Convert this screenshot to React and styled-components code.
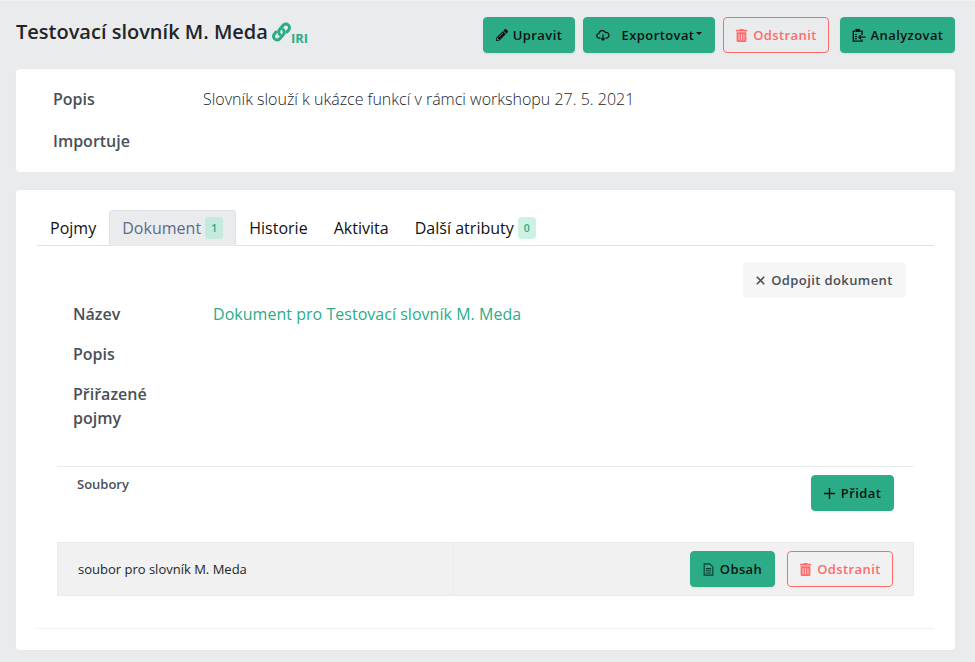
import React from 'react';
import styled, { createGlobalStyle } from 'styled-components';
import { FaPencilAlt, FaTrashAlt } from 'react-icons/fa';

const GlobalStyle = createGlobalStyle`
  html, body {
    margin: 0;
    padding: 0;
    background: #e9ebed;
    font-family: "Open Sans", "Noto Sans", sans-serif;
    color: #212529;
  }
`;

const Page = styled.div`
  box-sizing: border-box;
  width: 975px;
  height: 662px;
  overflow: hidden;
  padding: 16px 20px 0 16px;
  border-top: 1px solid #eef3f4;
`;

const Header = styled.div`
  display: flex;
  justify-content: space-between;
  align-items: center;
  height: 36px;
  margin-bottom: 16px;
`;

const Title = styled.h2`
  display: flex;
  align-items: center;
  margin: 0;
  font-size: 20px;
  font-weight: 600;
  color: #212529;
  line-height: 30px;
  position: relative;
  top: -3px;
`;

const IriLink = styled.span`
  display: inline-flex;
  align-items: flex-end;
  margin-left: 3px;
  color: #2bac87;
  svg { display: block; }
`;

const IriText = styled.span`
  font-size: 13px;
  font-weight: 700;
  line-height: 13px;
  margin-left: -1px;
  position: relative;
  top: 2px;
`;

const Toolbar = styled.div`
  display: flex;
  gap: 8px;
`;

const Button = styled.button`
  box-sizing: border-box;
  display: inline-flex;
  align-items: center;
  justify-content: center;
  gap: ${(p) => p.$gap || 5}px;
  height: 36px;
  width: ${(p) => p.$width}px;
  margin-left: ${(p) => p.$ml || 0}px;
  padding: 0;
  border-radius: 4px;
  font-family: inherit;
  font-size: 13px;
  font-weight: 600;
  letter-spacing: 0.4px;
  white-space: nowrap;
  ${(p) =>
    p.$variant === 'danger'
      ? 'background: transparent; border: 1px solid #ff6b6b; color: #ff6b6b;'
      : p.$variant === 'light'
      ? 'background: #f6f6f6; border: 1px solid #f6f6f6; color: #495057;'
      : 'background: #2bac87; border: 1px solid #2bac87; color: #111; box-shadow: 0 1px 2px rgba(0,0,0,.08);'}
`;

const Caret = styled.span`
  display: inline-block;
  width: 0;
  height: 0;
  margin-left: -3px;
  margin-top: -3px;
  border-top: 3px solid #111;
  border-left: 3px solid transparent;
  border-right: 3px solid transparent;
`;

const Card = styled.section`
  box-sizing: border-box;
  background: #fff;
  border-radius: 4px;
  box-shadow: 0 0 2px rgba(0, 0, 0, 0.04);
`;

const InfoCard = styled(Card)`
  height: 103px;
  padding: 18px 37px 0;
  margin-bottom: 18px;
`;

const MainCard = styled(Card)`
  height: 460px;
  padding: 20px 21px 0;
`;

const AttrRow = styled.div`
  display: grid;
  grid-template-columns: ${(p) => p.$label}px 1fr;
  padding-bottom: ${(p) => p.$pb || 0}px;
`;

const AttrLabel = styled.div`
  font-size: 16px;
  font-weight: 600;
  line-height: 24px;
  color: #495057;
`;

const AttrValue = styled.div`
  font-size: 16px;
  font-weight: ${(p) => p.$weight || 300};
  line-height: 24px;
  letter-spacing: ${(p) => p.$spacing || 0}px;
  color: ${(p) => p.$color || '#212529'};
`;

const Tabs = styled.div`
  display: flex;
  height: 35px;
  border-bottom: 1px solid #dee2e6;
`;

const Tab = styled.div`
  box-sizing: border-box;
  display: flex;
  align-items: center;
  height: 36px;
  padding: 0 13px;
  font-size: 16px;
  font-weight: 400;
  letter-spacing: 0.02px;
  border-radius: 4px 4px 0 0;
  ${(p) =>
    p.$active
      ? 'background: #e9ebed; color: #5c6b8a; border: 1px solid #dee2e6; border-bottom-color: #e9ebed; padding: 0 12px;'
      : 'color: #111;'}
`;

const Badge = styled.span`
  display: inline-flex;
  align-items: center;
  justify-content: center;
  width: 18px;
  height: 22px;
  margin-left: 4px;
  border-radius: 4px;
  font-size: 10.5px;
  font-weight: 600;
  color: #2bac87;
  background: ${(p) => (p.$active ? '#c4e9dd' : '#cdf1e5')};
`;

const TabBody = styled.div`
  padding: 16px 20px 0;
`;

const ActionRow = styled.div`
  display: flex;
  justify-content: flex-end;
  padding-right: 8px;
  margin-bottom: 4px;
`;

const Attrs = styled.div`
  padding-left: 16px;
`;

const FilesBlock = styled.div`
  margin-top: 36px;
  border-top: 1px solid #e9ebed;
`;

const FilesHead = styled.div`
  display: flex;
  justify-content: space-between;
  padding: 8px 20px 0;
  height: 75px;
  box-sizing: border-box;
`;

const FilesTitle = styled.div`
  font-size: 13px;
  font-weight: 600;
  line-height: 18px;
  color: #495057;
`;

const FileRow = styled.div`
  box-sizing: border-box;
  display: grid;
  grid-template-columns: 396px 1fr;
  height: 54px;
  background: #f1f1f2;
  border: 1px solid #e9ebed;
`;

const FileName = styled.div`
  display: flex;
  align-items: center;
  padding-left: 20px;
  font-size: 13px;
  color: #212529;
  border-right: 1px solid #e9ebed;
`;

const FileActions = styled.div`
  display: flex;
  align-items: center;
  justify-content: flex-end;
  gap: 12px;
  padding-right: 20px;
`;

const CardFooter = styled.div`
  margin-top: 32px;
  border-top: 1px solid #eeeff0;
`;

const ExportSpacer = styled.span`
  width: 2px;
`;

const CloudIcon = () => (
  <svg width="14" height="14" viewBox="0 0 16 16" fill="none" stroke="currentColor" strokeWidth="1.4">
    <path d="M5 11.5H3.6A2.6 2.6 0 0 1 3.4 6.3 3.9 3.9 0 0 1 10.8 5.3 3.1 3.1 0 0 1 12.4 11.5H11" />
    <path d="M8 7.5V14M5.8 11.8 8 14l2.2-2.2" />
  </svg>
);

const ClipboardIcon = () => (
  <svg width="14" height="14" viewBox="0 0 16 16" fill="none" stroke="currentColor" strokeWidth="1.5">
    <path d="M4 3.5H1.5V15h10v-2M11.5 8V3.5H9" />
    <rect x="4" y="1" width="5" height="3.5" fill="currentColor" stroke="none" />
    <path d="M3.5 7.5h2M3.5 10h2M3.5 12.5h2" />
    <path d="M15.5 10.5H8M10.2 8.2 7.9 10.5l2.3 2.3" />
  </svg>
);

const FileIcon = () => (
  <svg width="11" height="13" viewBox="0 0 12 15" fill="none" stroke="#063f30" strokeWidth="1.3">
    <path d="M1 1h6.5L11 4.5V14H1z" />
    <path d="M3 6.5h6M3 9h6M3 11.5h6" />
  </svg>
);

const LinkIcon = () => (
  <svg width="21" height="22" viewBox="0 0 21 22" fill="none" stroke="currentColor" strokeWidth="3" strokeLinecap="round">
    <path d="M12.2 8.5a3.6 3.6 0 0 1 .2 5l-3.6 4.2a3.6 3.6 0 0 1-5.4-4.8l1.6-1.9" />
    <path d="M8.8 13.5a3.6 3.6 0 0 1-.2-5l3.6-4.2a3.6 3.6 0 0 1 5.4 4.8l-1.6 1.9" />
  </svg>
);

const PlusIcon = () => (
  <svg width="11" height="11" viewBox="0 0 11 11" stroke="currentColor" strokeWidth="1.4">
    <path d="M5.5 0v11M0 5.5h11" />
  </svg>
);

const CrossIcon = () => (
  <svg width="9" height="9" viewBox="0 0 9 9" stroke="currentColor" strokeWidth="1.6">
    <path d="M0.8 0.8l7.4 7.4M8.2 0.8l-7.4 7.4" />
  </svg>
);

const App = () => (
  <Page>
    <GlobalStyle />
    <Header>
      <Title>
        Testovací slovník M. Meda
        <IriLink>
          <LinkIcon />
          <IriText>IRI</IriText>
        </IriLink>
      </Title>
      <Toolbar>
        <Button $width={92}>
          <FaPencilAlt size={12} />
          Upravit
        </Button>
        <Button $width={132}>
          <CloudIcon />
          <ExportSpacer />
          Exportovat
          <Caret />
        </Button>
        <Button $width={106} $variant="danger">
          <FaTrashAlt size={13} />
          Odstranit
        </Button>
        <Button $width={115} $ml={3}>
          <ClipboardIcon />
          Analyzovat
        </Button>
      </Toolbar>
    </Header>

    <InfoCard>
      <AttrRow $label={150} $pb={18}>
        <AttrLabel>Popis</AttrLabel>
        <AttrValue>Slovník slouží k ukázce funkcí v rámci workshopu 27. 5. 2021</AttrValue>
      </AttrRow>
      <AttrRow $label={150}>
        <AttrLabel>Importuje</AttrLabel>
        <AttrValue />
      </AttrRow>
    </InfoCard>

    <MainCard>
      <Tabs>
        <Tab>Pojmy</Tab>
        <Tab $active>
          Dokument
          <Badge $active>1</Badge>
        </Tab>
        <Tab>Historie</Tab>
        <Tab>Aktivita</Tab>
        <Tab>
          Další atributy
          <Badge>0</Badge>
        </Tab>
      </Tabs>
      <TabBody>
        <ActionRow>
          <Button $width={163} $variant="light" $gap={6}>
            <CrossIcon />
            Odpojit dokument
          </Button>
        </ActionRow>
        <Attrs>
          <AttrRow $label={140} $pb={16}>
            <AttrLabel>Název</AttrLabel>
            <AttrValue $weight={400} $color="#2bac87" $spacing={0.03}>
              Dokument pro Testovací slovník M. Meda
            </AttrValue>
          </AttrRow>
          <AttrRow $label={140} $pb={16}>
            <AttrLabel>Popis</AttrLabel>
            <AttrValue />
          </AttrRow>
          <AttrRow $label={140}>
            <AttrLabel>
              Přiřazené
              <br />
              pojmy
            </AttrLabel>
            <AttrValue />
          </AttrRow>
        </Attrs>
        <FilesBlock>
          <FilesHead>
            <FilesTitle>Soubory</FilesTitle>
            <Button $width={83} $gap={6}>
              <PlusIcon />
              Přidat
            </Button>
          </FilesHead>
          <FileRow>
            <FileName>soubor pro slovník M. Meda</FileName>
            <FileActions>
              <Button $width={85} $gap={6}>
                <FileIcon />
                Obsah
              </Button>
              <Button $width={106} $variant="danger">
                <FaTrashAlt size={13} />
                Odstranit
              </Button>
            </FileActions>
          </FileRow>
        </FilesBlock>
      </TabBody>
      <CardFooter />
    </MainCard>
  </Page>
);

export default App;
